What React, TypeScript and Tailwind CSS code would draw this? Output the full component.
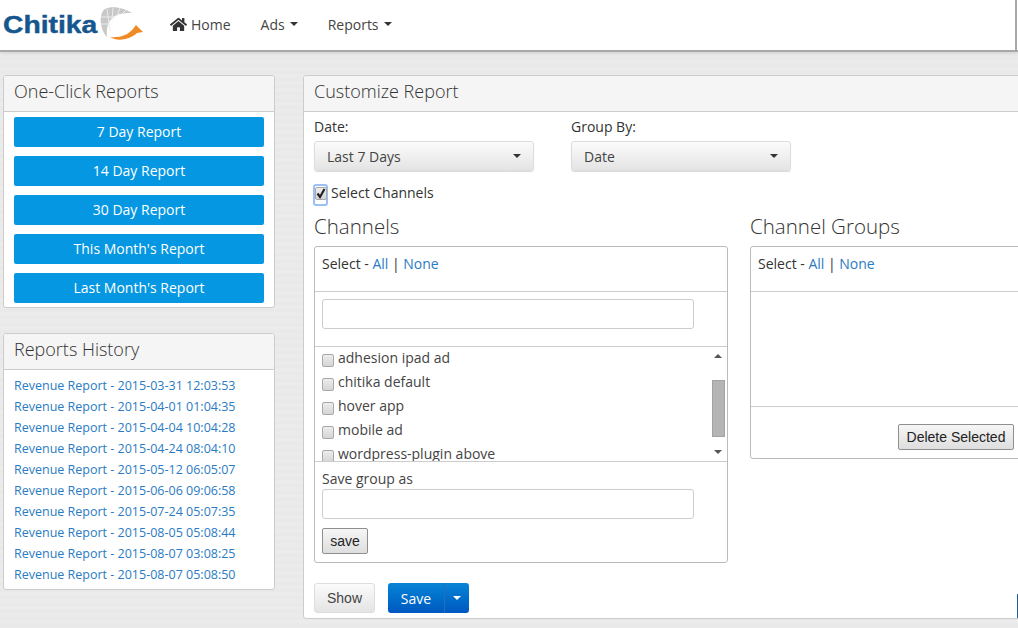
import { FaHome } from "react-icons/fa";

const quickReports = [
  "7 Day Report",
  "14 Day Report",
  "30 Day Report",
  "This Month's Report",
  "Last Month's Report",
];

const history = [
  "2015-03-31 12:03:53",
  "2015-04-01 01:04:35",
  "2015-04-04 10:04:28",
  "2015-04-24 08:04:10",
  "2015-05-12 06:05:07",
  "2015-06-06 09:06:58",
  "2015-07-24 05:07:35",
  "2015-08-05 05:08:44",
  "2015-08-07 03:08:25",
  "2015-08-07 05:08:50",
];

const channels = ["adhesion ipad ad", "chitika default", "hover app", "mobile ad", "wordpress-plugin above"];

function Caret({ className = "border-t-[#333]" }: { className?: string }) {
  return <span className={`inline-block w-0 h-0 border-x-4 border-x-transparent border-t-4 ${className}`} />;
}

function Logo() {
  return (
    <div className="relative w-[145px] h-[50px] shrink-0">
      <svg className="absolute left-0 top-0" width="145" height="50" viewBox="0 0 145 50">
        {/* grey globe crescent */}
        <path d="M132 13C125 8 112 5 105 9C99 13 99 28 107 37C106 28 108 20 115 16C120 13 126 13 132 13z" fill="#c8c8c8" />
        <path d="M107 9l3 22M113 8l-1 12M120 8l-3 8M126 10l-4 4M101 17l14 0M101 24l8 0" stroke="#ececec" strokeWidth="1" fill="none" />
        {/* orange arrow */}
        <path d="M110 37C120 38 128 35 133 29L136 25L143 32L137 33C128 41 116 41 110 37z" fill="#f08a24" />
      </svg>
      <span className="absolute left-[3px] top-[11px] text-[23px] leading-[28px] font-bold text-[#15568e] [-webkit-text-stroke:0.4px_#15568e] font-['Liberation_Sans',sans-serif] scale-x-[1.23] origin-left">
        Chitika
      </span>
    </div>
  );
}

function PanelHeading({ children }: { children: string }) {
  return (
    <div className="h-[36px] bg-[#f5f5f5] border-b border-[#ccc] px-[10px] text-[18px] font-light leading-[31px] text-[#333]">
      {children}
    </div>
  );
}

function SelectBox({ label }: { label: string }) {
  return (
    <div className="w-[220px] h-[30px] flex items-center justify-between px-[12px] rounded-[3px] border border-[#ddd] bg-gradient-to-b from-[#fbfbfb] to-[#e4e4e4] shadow-[0_1px_1px_rgba(0,0,0,0.15)] text-[14px] text-[#444]">
      {label}
      <Caret />
    </div>
  );
}

function FakeCheck({ checked = false }: { checked?: boolean }) {
  return (
    <span className="relative block w-[12px] h-[13px] rounded-[2px] border border-[#a9a9a9] bg-gradient-to-b from-[#ededed] to-[#d4d4d4] shrink-0">
      {checked && (
        <svg className="absolute left-[-1px] top-[-1px]" width="12" height="13" viewBox="0 0 12 13">
          <path d="M2.5 6.5l2.5 3.5 4.5-8" fill="none" stroke="#222" strokeWidth="2.2" />
        </svg>
      )}
    </span>
  );
}

function SelectLinks() {
  return (
    <div className="h-[45px] border-b border-[#ccc] px-[7px] pt-[6px] text-[14px] leading-[22px] text-[#333]">
      Select - <span className="text-[#2a7bc4]">All</span> | <span className="text-[#2a7bc4]">None</span>
    </div>
  );
}

function PlainButton({ children, className }: { children: string; className: string }) {
  return (
    <button className={`rounded-[2px] border border-[#8e8e8e] bg-gradient-to-b from-[#f6f6f6] to-[#dedede] text-[14px] text-[#222] font-['Liberation_Sans',sans-serif] ${className}`}>
      {children}
    </button>
  );
}

export default function App() {
  return (
    <div className="w-[1018px] h-[628px] overflow-hidden bg-[#eaeaea] bg-[repeating-linear-gradient(0deg,#ececec_0px,#e8e8e8_2px,#ebebeb_5px,#ececec_7px)] font-['Open_Sans',sans-serif]">
      <nav className="h-[52px] bg-white border-b-2 border-[#a8a8a8] shadow-[0_1px_4px_rgba(0,0,0,0.12)]">
        <div className="w-[1017px] h-[50px] border-r-2 border-[#a8a8a8] flex items-start">
          <Logo />
          <div className="flex items-center h-[48px] text-[14px] text-[#444] pl-[25px] gap-[30px]">
            <span className="flex items-center gap-[4px]">
              <FaHome className="text-[#333] w-[17px] h-[17px]" />
              Home
            </span>
            <span className="flex items-center gap-[5px]">Ads <Caret /></span>
            <span className="flex items-center gap-[5px]">Reports <Caret /></span>
          </div>
        </div>
      </nav>

      <div className="flex items-start pt-[23px] pl-[3px] gap-[28px]">
        <div className="w-[272px] shrink-0 flex flex-col gap-[25px]">
          <section className="h-[233px] bg-white border border-[#ccc] rounded-[3px] overflow-hidden">
            <PanelHeading>One-Click Reports</PanelHeading>
            <div className="flex flex-col gap-[9px] px-[10px] pt-[5px]">
              {quickReports.map((r) => (
                <button key={r} className="h-[30px] pb-[2px] rounded-[2px] bg-[#0597e2] text-white text-[14px]">
                  {r}
                </button>
              ))}
            </div>
          </section>

          <section className="h-[257px] bg-white border border-[#ccc] rounded-[3px] overflow-hidden">
            <PanelHeading>Reports History</PanelHeading>
            <ul className="px-[10px] pt-[5px] text-[12.5px] leading-[21px] text-[#2a7bc4] whitespace-nowrap">
              {history.map((h) => (
                <li key={h}>Revenue Report - {h}</li>
              ))}
            </ul>
          </section>
        </div>

        <section className="w-[760px] shrink-0 h-[544px] bg-white border border-[#ccc] rounded-[3px] overflow-hidden">
          <PanelHeading>Customize Report</PanelHeading>
          <div className="pl-[10px]">
            <div className="flex gap-[37px] pt-[5px] text-[14px] text-[#333]">
              <div>
                <div className="h-[24px] leading-[20px]">Date:</div>
                <SelectBox label="Last 7 Days" />
              </div>
              <div>
                <div className="h-[24px] leading-[20px]">Group By:</div>
                <SelectBox label="Date" />
              </div>
            </div>

            <div className="flex items-start mt-[12px] h-[22px] text-[14px] text-[#333]">
              <span className="block w-[15px] h-[22px] rounded-[3px] border-2 border-[#9cc0f5] pt-[1px] -ml-[1px] mr-[3px] mt-[1px]">
                <FakeCheck checked />
              </span>
              <span className="leading-[19px]">Select Channels</span>
            </div>

            <div className="flex gap-[22px] mt-[8px]">
              <div className="w-[414px] shrink-0">
                <h3 className="text-[20.5px] font-light leading-[26px] h-[33px] text-[#333]">Channels</h3>
                <div className="border border-[#bbb] rounded-[3px] h-[317px] overflow-hidden">
                  <SelectLinks />
                  <div className="h-[55px] border-b border-[#ccc] pl-[7px] pt-[7px]">
                    <div className="w-[372px] h-[30px] rounded-[3px] border border-[#ccc]" />
                  </div>
                  <div className="h-[115px] border-b border-[#ccc] flex overflow-hidden">
                    <div className="flex-1 pl-[7px] overflow-hidden">
                      <div className="-mt-[2px]">
                        {channels.map((c) => (
                          <div key={c} className="h-[24px] flex items-center gap-[4px] text-[14px] text-[#444]">
                            <span className="pt-[6px]"><FakeCheck /></span>
                            {c}
                          </div>
                        ))}
                      </div>
                    </div>
                    <div className="w-[16px] mr-[1px] flex flex-col items-center justify-between py-[7px] relative">
                      <span className="w-0 h-0 border-x-4 border-x-transparent border-b-4 border-b-[#555]" />
                      <span className="w-[13px] h-[57px] bg-[#b5b5b5] border border-[#a3a3a3] absolute top-[33px]" />
                      <span className="w-0 h-0 border-x-4 border-x-transparent border-t-4 border-t-[#555]" />
                    </div>
                  </div>
                  <div className="pl-[7px] pt-[7px] text-[14px] text-[#444]">
                    <div className="h-[20px] leading-[20px]">Save group as</div>
                    <div className="w-[372px] h-[30px] rounded-[3px] border border-[#ccc]" />
                    <PlainButton className="w-[46px] h-[26px] mt-[9px] block">save</PlainButton>
                  </div>
                </div>
              </div>

              <div className="w-[300px] shrink-0">
                <h3 className="text-[20.5px] font-light leading-[26px] h-[33px] text-[#333]">Channel Groups</h3>
                <div className="border border-[#bbb] rounded-[3px] h-[213px] overflow-hidden">
                  <SelectLinks />
                  <div className="h-[115px] border-b border-[#ccc]" />
                  <div className="pl-[147px] pt-[17px]">
                    <PlainButton className="w-[116px] h-[26px] block">Delete Selected</PlainButton>
                  </div>
                </div>
              </div>
            </div>

            <div className="flex items-start mt-[20px]">
              <button className="w-[61px] h-[30px] rounded-[3px] border border-[#ddd] bg-gradient-to-b from-[#fbfbfb] to-[#e4e4e4] text-[14px] text-[#444] font-['Liberation_Sans',sans-serif]">
                Show
              </button>
              <div className="w-[81px] h-[30px] ml-[13px] rounded-[3px] bg-gradient-to-b from-[#0a84d6] to-[#0058c0] flex text-white text-[14px]">
                <span className="w-[57px] border-r border-[#2b6db5] flex items-center justify-center">Save</span>
                <span className="flex-1 flex items-center justify-center"><Caret className="border-t-white" /></span>
              </div>
              <span className="w-[1px] h-[24px] mt-[11px] ml-[548px] bg-[#1d5f9e]" />
            </div>
          </div>
        </section>
      </div>
    </div>
  );
}
